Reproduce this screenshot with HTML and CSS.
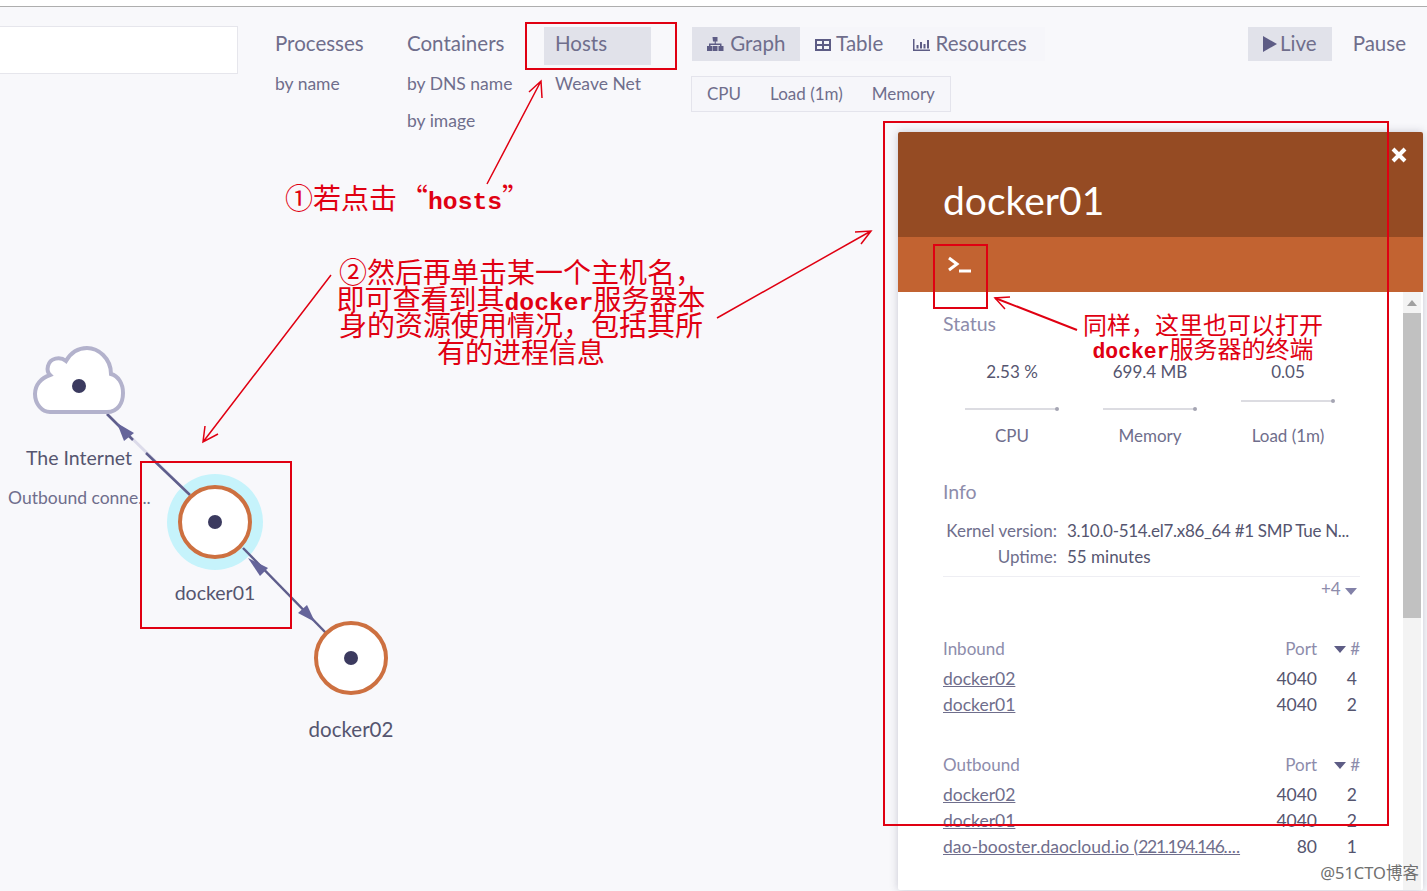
FILE: index.html
```html
<!DOCTYPE html>
<html lang="zh-CN" dir="ltr">
  <head>
    <meta charset="utf-8">
    <title>Weave Scope</title>
    <link rel="stylesheet" href="styles.css">
  </head>
  <body>
    <div class="page">
      <div class="browser-edge"></div>

      <div class="topbar">
        <div class="search"></div>
        <div class="topology topology-processes">
          <div class="topology-main">Processes</div>
          <div class="topology-sub">by name</div>
        </div>
        <div class="topology topology-containers">
          <div class="topology-main">Containers</div>
          <div class="topology-sub">by DNS name</div>
          <div class="topology-sub">by image</div>
        </div>
        <div class="topology topology-hosts">
          <div class="topology-main active">Hosts</div>
          <div class="topology-sub">Weave Net</div>
        </div>
        <div class="views">
          <div class="view-modes">
            <div class="view-btn active">
              <svg class="icon" width="20" height="16" viewBox="0 0 20 16"><path d="M7.500 1h5v4.500h-1.700v2h5.700v2.500h2v5h-5v-5h1.500v-1h-9.500v1h1.500v5h-5v-5h2v-2.500h5.700v-2h-1.700z M7.500 10h5v5h-5z" fill="#5d5c85"/></svg>
              Graph
            </div>
            <div class="view-btn">
              <svg class="icon" width="16" height="14" viewBox="0 0 16 14"><path d="M0 1h16v12h-16z M2 3v3h5v-3z M9 3v3h5v-3z M2 8v3h5v-3z M9 8v3h5v-3z" fill="#5d5c85" fill-rule="evenodd"/></svg>
              Table
            </div>
            <div class="view-btn">
              <svg class="icon" width="17" height="14" viewBox="0 0 17 14"><path d="M0 1h1.500v10.500h15.500v1.500h-17z M3.500 7h2v3.500h-2z M7 4h2v6.500h-2z M10.500 6h2v4.500h-2z M14 2h2v8.500h-2z" fill="#5d5c85"/></svg>
              Resources
            </div>
          </div>
          <div class="metric-selector">
            <span>CPU</span>
            <span>Load (1m)</span>
            <span>Memory</span>
          </div>
        </div>
        <div class="time-controls">
          <div class="time-btn active">
            <svg class="icon play-icon" width="14" height="16" viewBox="0 0 14 16"><path d="M0 0l14 8-14 8z" fill="#5d5c85"/></svg>
            Live
          </div>
          <div class="time-btn">Pause</div>
        </div>
      </div>

      <!-- graph nodes sit on a free canvas -->
      <svg class="graph" width="420" height="891" viewBox="0 0 420 891">
        <circle cx="215" cy="522" r="48" fill="#c6f3fb"/>
        <path d="M107 414L190 495" stroke="#dcdbea" stroke-width="3"/>
        <path d="M107 414L133 440M146 453L190 495" stroke="#5f5e8c" stroke-width="2.500"/>
        <path d="M117 423L134 433L124 441z" fill="#65649a"/>
        <path d="M243 548L326 633" stroke="#5f5e8c" stroke-width="2.500"/>
        <path d="M248 558L268 568L260 576z" fill="#65649a"/>
        <path d="M315 622L298 613L307 605z" fill="#65649a"/>
        <circle cx="215" cy="522" r="35" fill="#fff" stroke="#cd7040" stroke-width="4"/>
        <circle cx="215" cy="522" r="7" fill="#3b3a5f"/>
        <circle cx="351" cy="658" r="35" fill="#fff" stroke="#cd7040" stroke-width="4"/>
        <circle cx="351" cy="658" r="7" fill="#3b3a5f"/>
        <path d="M50 412H107C118 412 123 403 123 393C123 383 118 376 111 374C111 358 98 348 87 348C76 348 70 354 66 361C60 356 50 358 48 366C47 370 48 373 50 375C41 378 35 385 35 394C35 404 42 412 50 412Z" fill="#fff" stroke="#b3b2cc" stroke-width="4"/>
        <circle cx="79" cy="386" r="7" fill="#3b3a5f"/>
      </svg>
      <div class="node-label label-internet">The Internet</div>
      <div class="node-sublabel">Outbound conne...</div>
      <div class="node-label label-docker01">docker01</div>
      <div class="node-label label-docker02">docker02</div>

      <div class="details">
        <div class="details-header">
          <svg class="details-close" width="16" height="16" viewBox="0 0 16 16"><path d="M2 2l12 12M14 2l-12 12" stroke="#fff" stroke-width="4"/></svg>
          <div class="details-title">docker01</div>
        </div>
        <div class="details-tools">
          <svg width="26" height="20" viewBox="0 0 26 20"><path d="M2 3l8 6-8 6" fill="none" stroke="#fff" stroke-width="3"/><path d="M12 16h12" stroke="#fff" stroke-width="3"/></svg>
        </div>
        <div class="details-body">
          <div class="details-content">
            <h3 class="section-title">Status</h3>
            <div class="metrics">
              <div class="metric">
                <div class="metric-value">2.53 %</div>
                <svg class="spark" width="100" height="40" viewBox="0 0 100 40"><path d="M3 25H95" stroke="#b9b9c4"/><circle cx="95" cy="25" r="2" fill="#a5a5b3"/></svg>
                <div class="metric-label">CPU</div>
              </div>
              <div class="metric">
                <div class="metric-value">699.4 MB</div>
                <svg class="spark" width="100" height="40" viewBox="0 0 100 40"><path d="M3 25H95" stroke="#b9b9c4"/><circle cx="95" cy="25" r="2" fill="#a5a5b3"/></svg>
                <div class="metric-label">Memory</div>
              </div>
              <div class="metric">
                <div class="metric-value">0.05</div>
                <svg class="spark" width="100" height="40" viewBox="0 0 100 40"><path d="M3 17H95" stroke="#b9b9c4"/><circle cx="95" cy="17" r="2" fill="#a5a5b3"/></svg>
                <div class="metric-label">Load (1m)</div>
              </div>
            </div>

            <h3 class="section-title info-title">Info</h3>
            <div class="info-rows">
              <div class="info-row"><span class="info-key">Kernel version:</span><span class="info-value info-kernel">3.10.0-514.el7.x86_64 #1 SMP Tue N...</span></div>
              <div class="info-row"><span class="info-key">Uptime:</span><span class="info-value">55 minutes</span></div>
            </div>
            <div class="info-more">+4 <svg width="12" height="7" viewBox="0 0 12 7"><path d="M0 0h12l-6 7z" fill="#8281a8"/></svg></div>

            <div class="conn-table inbound">
              <div class="conn-head">
                <span>Inbound</span>
                <span class="conn-port">Port</span>
                <span class="conn-count"><svg class="caret" width="12" height="7" viewBox="0 0 12 7"><path d="M0 0h12l-6 7z" fill="#5d5c85"/></svg> #</span>
              </div>
              <div class="conn-row"><a>docker02</a><span class="conn-port">4040</span><span class="conn-num">4</span></div>
              <div class="conn-row"><a>docker01</a><span class="conn-port">4040</span><span class="conn-num">2</span></div>
            </div>

            <div class="conn-table outbound">
              <div class="conn-head">
                <span>Outbound</span>
                <span class="conn-port">Port</span>
                <span class="conn-count"><svg class="caret" width="12" height="7" viewBox="0 0 12 7"><path d="M0 0h12l-6 7z" fill="#5d5c85"/></svg> #</span>
              </div>
              <div class="conn-row"><a>docker02</a><span class="conn-port">4040</span><span class="conn-num">2</span></div>
              <div class="conn-row"><a>docker01</a><span class="conn-port">4040</span><span class="conn-num">2</span></div>
              <div class="conn-row"><a>dao-booster.daocloud.io (<span class="conn-ip">221.194.146</span>....</a><span class="conn-port">80</span><span class="conn-num">1</span></div>
            </div>
          </div>
          <div class="scrollbar">
            <div class="scroll-up"><svg width="10" height="6" viewBox="0 0 10 6"><path d="M0 6l5-6 5 6z" fill="#a0a0a0"/></svg></div>
            <div class="scroll-thumb"></div>
          </div>
        </div>
      </div>

      <!-- red annotations drawn over the screenshot -->
      <div class="mark mark-hosts"></div>
      <div class="mark mark-panel"></div>
      <div class="mark mark-terminal"></div>
      <div class="mark mark-node"></div>
      <svg class="arrows" width="1427" height="891" viewBox="0 0 1427 891">
        <g fill="none" stroke="#e00012" stroke-width="1.500">
          <path d="M487 184L541 81M529 92L541 81L542 98"/>
          <path d="M331 275L203 442M205 426L203 442L218 434"/>
          <path d="M717 318L871 231M855 232L871 231L861 244"/>
          <path d="M1077 330L995 298" stroke-width="2"/>
          <path d="M1010 297L995 298L1005 309"/>
        </g>
      </svg>
      <div class="note note-one">①若点击<span class="quote-open">“</span><span class="latin">hosts</span><span class="quote-close">”</span></div>
      <div class="note note-two">②然后再单击某一个主机名，<br>即可查看到其<span class="latin">docker</span>服务器本<br>身的资源使用情况，包括其所<br>有的进程信息</div>
      <div class="note note-three">同样，这里也可以打开<br><span class="latin">docker</span>服务器的终端</div>
      <div class="watermark">@51CTO博客</div>
    </div>
  </body>
</html>
```

FILE: styles.css
```css
body {
  margin: 0;
  font-family: "Lato", "Noto Sans", sans-serif;
  color: #6f6e8c;
}

.page {
  position: relative;
  height: 891px;
  overflow: hidden;
  background-color: #f8f8fb;
}

.browser-edge {
  height: 6px;
  background-color: #fff;
  border-bottom: 1px solid #aeaeae;
}

.icon {
  vertical-align: -1px;
}

.play-icon {
  margin-right: -2px;
}

/* top bar */
.topbar {
  display: flex;
  padding-top: 19px;
}

.search {
  width: 237px;
  height: 46px;
  margin-right: 37px;
  background-color: #fff;
  border: 1px solid #e6e6ec;
  border-left: 0;
}

.topology-processes {
  width: 132px;
}

.topology-containers {
  width: 137px;
}

.topology-hosts {
  width: 107px;
  margin-right: 40px;
}

.topology-main {
  height: 38px;
  margin-top: 1px;
  font-size: 20.500px;
  line-height: 33px;
}

.topology-main.active {
  background-color: #e1e2ea;
}

.topology-hosts .topology-main,
.topology-hosts .topology-sub {
  padding-left: 11px;
}

.topology-sub {
  height: 37px;
  font-size: 17.500px;
  line-height: 37px;
}

.view-modes {
  display: flex;
  width: 353px;
  height: 34px;
  margin-top: 1px;
  margin-left: 1px;
  background-color: #f6f6fa;
}

.view-btn {
  padding: 0 15px;
  font-size: 20.500px;
  line-height: 32px;
  white-space: nowrap;
}

.view-btn.active {
  padding-left: 13px;
  background-color: #e1e2ea;
}

.metric-selector {
  display: flex;
  gap: 29px;
  box-sizing: border-box;
  width: 260px;
  height: 36px;
  margin-top: 15px;
  padding-left: 15px;
  font-size: 17px;
  line-height: 34px;
  background-color: #f6f6fa;
  border: 1px solid #e4e4ec;
}

.time-controls {
  display: flex;
  height: 34px;
  margin-top: 1px;
  margin-left: auto;
  font-size: 20.500px;
  line-height: 32px;
}

.time-btn {
  padding: 0 21px;
}

.time-btn.active {
  width: 84px;
  box-sizing: border-box;
  padding: 0 0 0 15px;
  background-color: #e1e2ea;
}

/* graph canvas */
.graph {
  position: absolute;
  top: 0;
  left: 0;
}

.node-label {
  position: absolute;
  width: 160px;
  font-size: 19.500px;
  line-height: 24px;
  text-align: center;
  color: #55556f;
}

.label-internet {
  left: -1px;
  top: 446px;
}

.label-docker01 {
  left: 135px;
  top: 581px;
}

.label-docker02 {
  left: 271px;
  top: 717px;
  font-size: 20.500px;
}

.node-sublabel {
  position: absolute;
  left: 8px;
  top: 488px;
  font-size: 17.500px;
  line-height: 20px;
  white-space: nowrap;
}

/* details panel */
.details {
  position: absolute;
  left: 898px;
  top: 132px;
  display: flex;
  flex-direction: column;
  width: 525px;
  height: 758px;
  background-color: #fff;
  border-radius: 2px;
  box-shadow: 0 0 8px rgba(60, 60, 90, 0.25);
}

.details-header {
  position: relative;
  height: 105px;
  padding-left: 45px;
  background-color: #954b23;
  border-radius: 2px 2px 0 0;
}

.details-title {
  padding-top: 44px;
  font-size: 39px;
  line-height: 48px;
  color: #fff;
}

.details-close {
  position: absolute;
  top: 15px;
  right: 16px;
}

.details-tools {
  display: flex;
  align-items: center;
  height: 55px;
  padding-left: 49px;
  background-color: #c26331;
}

.details-body {
  display: flex;
  flex: 1;
  min-height: 0;
}

.details-content {
  width: 417px;
  padding-left: 45px;
}

.section-title {
  margin: 0;
  padding-top: 21px;
  font-size: 19.500px;
  font-weight: 400;
  line-height: 22px;
  color: #8d8cab;
}

.metrics {
  display: grid;
  grid-template-columns: repeat(3, 138px);
  margin-top: 27px;
  text-align: center;
}

.metric-value {
  font-size: 17px;
  line-height: 20px;
  color: #55556f;
}

.spark {
  display: block;
  margin: 2px auto;
}

.metric-label {
  font-size: 17px;
  line-height: 20px;
}

.info-title {
  padding-top: 35px;
}

.info-rows {
  margin-top: 15px;
}

.info-row {
  display: flex;
  gap: 10px;
  height: 26px;
  font-size: 17px;
  line-height: 26px;
}

.info-key {
  width: 114px;
  text-align: right;
  white-space: nowrap;
}

.info-value {
  white-space: nowrap;
  color: #55556f;
}

.info-kernel {
  letter-spacing: -0.300px;
}

.info-more {
  margin-top: 6px;
  padding-right: 3px;
  font-size: 17px;
  line-height: 24px;
  text-align: right;
  border-top: 1px solid #eeeef3;
  color: #8d8cab;
}

.conn-table {
  font-size: 17.500px;
  line-height: 26px;
}

.inbound {
  margin-top: 35px;
}

.outbound {
  margin-top: 34px;
}

.conn-head,
.conn-row {
  display: grid;
  grid-template-columns: 294px 80px 43px;
}

.conn-head {
  height: 30px;
  font-size: 17px;
  color: #8d8cab;
}

.conn-row {
  height: 26px;
  color: #55556f;
}

.conn-row a {
  color: #6f6e8c;
  text-decoration: underline;
  white-space: nowrap;
}

.conn-ip {
  letter-spacing: -1.300px;
}

.conn-port {
  text-align: right;
}

.conn-count {
  text-align: right;
}

.caret {
  vertical-align: 2px;
}

.conn-num {
  padding-right: 3px;
  text-align: right;
}

.scrollbar {
  width: 18px;
  margin-left: auto;
  margin-right: 2px;
  background-color: #f3f3f3;
}

.scroll-up {
  display: flex;
  justify-content: center;
  align-items: center;
  height: 21px;
}

.scroll-thumb {
  height: 305px;
  background-color: #c1c1c1;
}

/* annotations */
.mark {
  position: absolute;
  box-sizing: border-box;
  border: 2px solid #e00012;
}

.mark-hosts {
  left: 525px;
  top: 22px;
  width: 152px;
  height: 48px;
}

.mark-panel {
  left: 883px;
  top: 121px;
  width: 506px;
  height: 705px;
}

.mark-terminal {
  left: 933px;
  top: 244px;
  width: 55px;
  height: 65px;
}

.mark-node {
  left: 140px;
  top: 461px;
  width: 152px;
  height: 168px;
}

.arrows {
  position: absolute;
  top: 0;
  left: 0;
}

.note {
  position: absolute;
  font-family: "Noto Sans CJK SC", sans-serif;
  color: #e00012;
  text-align: center;
  white-space: nowrap;
}

.latin {
  font-family: "Liberation Mono", monospace;
  font-weight: 700;
  font-size: 24.700px;
  line-height: 0;
}

.quote-open {
  padding-left: 3px;
}

.note-one {
  left: 285px;
  top: 181px;
  font-size: 28px;
  line-height: 32px;
}

.note-two {
  left: 321px;
  top: 258px;
  width: 400px;
  font-size: 28px;
  line-height: 26.600px;
}

.note-three {
  left: 1063px;
  top: 312px;
  width: 280px;
  font-size: 24px;
  line-height: 24px;
}

.note-three .latin {
  font-size: 21.400px;
}

.watermark {
  position: absolute;
  right: 8px;
  bottom: 8px;
  font-family: "Noto Sans", "Noto Sans CJK SC", sans-serif;
  font-size: 16.500px;
  line-height: 20px;
  color: #6f6f6f;
}
```
